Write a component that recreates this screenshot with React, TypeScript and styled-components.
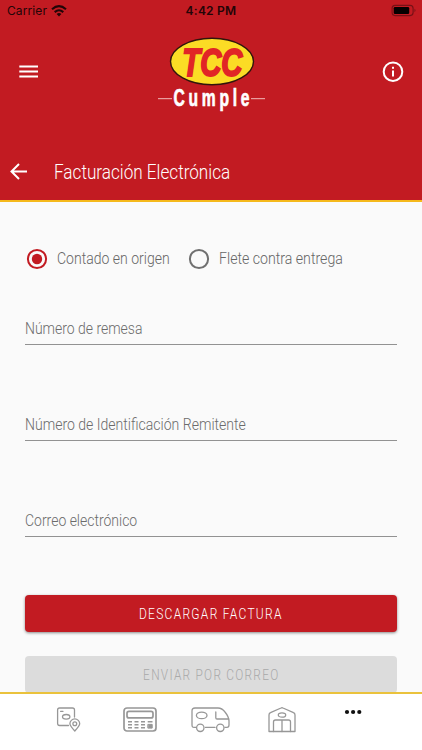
import React, { useState } from "react";
import styled, { createGlobalStyle } from "styled-components";

const red = "#c21b22";

const GlobalStyle = createGlobalStyle`
  * { box-sizing: border-box; }
  body { margin: 0; background: #fafafa; }
  button { border: 0; padding: 0; background: none; font: inherit; color: inherit; }
  svg { flex: none; overflow: visible; }
`;

const Screen = styled.div`
  display: flex;
  flex-direction: column;
  width: 422px;
  height: 750px;
  overflow: hidden;
  background: #fafafa;
  font-family: Roboto, sans-serif;
  font-weight: 300;
`;

const Header = styled.header`
  flex: none;
  height: 202px;
  background: ${red};
  border-bottom: 2px solid #f5b91c;
`;

const StatusBar = styled.div`
  display: grid;
  grid-template-columns: 1fr auto 1fr;
  align-items: center;
  height: 22px;
  padding: 0 7px;
  color: #230507;
  font: 400 12px/22px Inter, sans-serif;
`;

const Carrier = styled.div`
  display: flex;
  align-items: center;
  gap: 4px;
  letter-spacing: 0.1px;
`;

const Clock = styled.div`
  font-weight: 600;
  letter-spacing: 0.25px;
`;

const Battery = styled.svg`
  justify-self: end;
  margin-right: -2px;
`;

const Brand = styled.div`
  display: flex;
  justify-content: space-between;
  align-items: flex-start;
  height: 122px;
  padding: 14px 17px 0 17px;
`;

const IconButton = styled.button<{ $top?: number }>`
  display: flex;
  width: 24px;
  height: 24px;
  margin-top: ${(p) => p.$top ?? 0}px;
  color: #fff;
`;

const TitleRow = styled.div`
  display: flex;
  align-items: center;
  gap: 22.5px;
  height: 56px;
  padding-left: 7px;
`;

const Narrow = styled.span<{ $scale: number; $center?: boolean }>`
  display: inline-block;
  white-space: nowrap;
  transform: scaleX(${(p) => p.$scale});
  transform-origin: ${(p) => (p.$center ? "center" : "left")};
`;

const Title = styled.h1`
  margin: 0;
  color: #fff;
  font-size: 20px;
  font-weight: 300;
  line-height: 28px;
`;

const Form = styled.main`
  flex: 1;
  min-height: 0;
  overflow: hidden;
  padding: 45px 25px 0;
`;

const Options = styled.div`
  display: grid;
  grid-template-columns: 161.5px 1fr;
  height: 24px;
`;

const Option = styled.button`
  display: flex;
  align-items: center;
  gap: 8px;
  min-width: 0;
  color: #666;
  font-size: 16.5px;
  line-height: 24px;
`;

const Field = styled.label`
  display: flex;
  align-items: flex-end;
  height: 96px;
  padding-bottom: 4px;
  border-bottom: 1px solid #929292;
  color: #6b6b6b;
  font-size: 16px;
  line-height: 22px;
`;

const Fields = styled.div`
  margin-top: -22px;
`;

const Action = styled.button<{ $disabled?: boolean }>`
  display: block;
  width: 100%;
  height: 36.5px;
  border-radius: 4px;
  background: ${(p) => (p.$disabled ? "#dcdcdc" : red)};
  color: ${(p) => (p.$disabled ? "#a9a9a9" : "#fff")};
  box-shadow: ${(p) => (p.$disabled ? "none" : "0 1px 3px rgba(0,0,0,.45)")};
  font-size: 15px;
  line-height: 38px;
  letter-spacing: 1.6px;
`;

const Actions = styled.div`
  display: grid;
  gap: 24.5px;
  margin-top: 58px;
`;

const TabBar = styled.nav`
  flex: none;
  display: flex;
  justify-content: center;
  height: 58px;
  padding-top: 9px;
  border-top: 2px solid #eac23c;
  background: #fff;
`;

const Tab = styled.button`
  display: flex;
  justify-content: center;
  width: 71.2px;
  height: 28px;
  color: #979797;
`;

function Logo() {
  return (
    <svg width="110" height="76" viewBox="0 0 110 76">
      <ellipse cx="56" cy="25.5" rx="41.5" ry="23.3" fill="#fbdc25" stroke="#30150c" strokeWidth="1.4" />
      <text x="56.3" y="39.5" textAnchor="middle" textLength="60" lengthAdjust="spacingAndGlyphs"
        fontFamily="Liberation Sans, sans-serif" fontSize="39.5" fontWeight="700" fontStyle="italic"
        fill="#e12526" stroke="#e12526" strokeWidth="2">TCC</text>
      <path d="M2 62.7H16M95 62.7H109" stroke="#f2bcbc" strokeWidth="1" />
      <g transform="translate(17.6 69.7) scale(0.68 1)">
        <text x="0" y="0" textLength="111.5" lengthAdjust="spacing"
          fontFamily="Liberation Sans, sans-serif" fontSize="23" fontWeight="700"
          fill="#fff" stroke="#fff" strokeWidth="0.7">Cumple</text>
      </g>
    </svg>
  );
}

function Radio({ checked }: { checked: boolean }) {
  return (
    <svg width="24" height="24" viewBox="0 0 24 24">
      <circle cx="12" cy="12" r="9.1" fill="none" stroke={checked ? red : "#707070"} strokeWidth="2" />
      {checked && <circle cx="12" cy="12" r="5.2" fill={red} />}
    </svg>
  );
}

const stroke = { fill: "none", stroke: "currentColor", strokeWidth: 1.3, strokeLinecap: "round", strokeLinejoin: "round" } as const;

function PackageIcon() {
  return (
    <svg width="24" height="28" viewBox="0 0 24 28" {...stroke}>
      <path d="M11.5 22.5H2.6Q.6 22.5 .6 20.5V7Q.6 5 2.6 5H15.5Q17.5 5 17.5 7V14M3.6 8.3H6" />
      <ellipse cx="9.2" cy="13.8" rx="3.7" ry="2.3" />
      <path d="M17.8 28C14.7 24.6 12.9 22.6 12.9 20.8a4.9 4.9 0 0 1 9.8 0c0 1.8-1.8 3.8-4.9 7.2Z" />
      <circle cx="17.8" cy="20.8" r="1.9" />
    </svg>
  );
}

function CalculatorIcon() {
  return (
    <svg width="34" height="28" viewBox="0 0 34 28" {...stroke}>
      <rect x="1" y="5" width="32" height="23" rx="3" strokeWidth="1.7" />
      <rect x="4" y="8.4" width="26" height="6.5" rx="2" strokeWidth="1.7" />
      <path d="M5 18.7H9M11.5 18.7H15.5M18 18.7H22M5 21.8H9M11.5 21.8H15.5M18 21.8H22M5 24.8H9M11.5 24.8H15.5M18 24.8H22M24.7 18.7H29.5" strokeWidth="1.5" strokeLinecap="butt" />
      <rect x="25.2" y="21.4" width="4" height="3.7" fill="currentColor" strokeWidth="1" />
    </svg>
  );
}

function VanIcon() {
  return (
    <svg width="40" height="28" viewBox="0 0 40 28" {...stroke}>
      <path d="M5 24.4H3Q1 24.4 1 22V8Q1 5 4 5H27Q31 5 34 9Q38 14 38 18V22Q38 24.4 36 24.4H34M14.5 24.4H24M24.8 9V14.8Q24.8 16 26 16H37.3" />
      <ellipse cx="10.7" cy="12.4" rx="5.3" ry="3.2" />
      <circle cx="9.3" cy="24.8" r="3.7" />
      <circle cx="29.3" cy="24.8" r="3.7" />
    </svg>
  );
}

function WarehouseIcon() {
  return (
    <svg width="28" height="28" viewBox="0 0 28 28" {...stroke}>
      <path d="M1 28.5V12Q1 10.3 2.5 9.7L13 5Q14 4.5 15 5L25.5 9.7Q27 10.3 27 12V28.5Z" />
      <path d="M5.5 28.5V19Q5.5 17 7.5 17H20.5Q22.5 17 22.5 19V28.5M14 17V28.5" />
      <ellipse cx="14" cy="12" rx="3.7" ry="2.2" />
    </svg>
  );
}

function MoreIcon() {
  return (
    <svg width="20" height="28" viewBox="0 0 20 28" fill="#101010">
      <circle cx="4" cy="9" r="2.1" /><circle cx="10.1" cy="9" r="2.1" /><circle cx="16.3" cy="9" r="2.1" />
    </svg>
  );
}

const options = [
  { label: "Contado en origen", scale: 0.85 },
  { label: "Flete contra entrega", scale: 0.857 },
];

const fields = [
  { label: "Número de remesa", scale: 0.873 },
  { label: "Número de Identificación Remitente", scale: 0.878 },
  { label: "Correo electrónico", scale: 0.873 },
];

const tabs = [PackageIcon, CalculatorIcon, VanIcon, WarehouseIcon, MoreIcon];

export default function App() {
  const [selected, setSelected] = useState(0);
  return (
    <>
      <GlobalStyle />
      <Screen>
        <Header>
          <StatusBar>
            <Carrier>
              Carrier
              <svg width="16" height="12" viewBox="0 0 16 12" fill="none" stroke="currentColor" strokeWidth="2.1">
                <path d="M1 4.2Q8 -1.8 15 4.2M3.7 7.1Q8 3.4 12.3 7.1" />
                <path d="M8 11.5 5.6 9Q8 7 10.4 9Z" fill="currentColor" stroke="none" />
              </svg>
            </Carrier>
            <Clock>4:42 PM</Clock>
            <Battery width="25" height="12" viewBox="0 0 25 12">
              <rect x="0.1" y="0.4" width="21" height="10.2" rx="3" fill="none" stroke="#771116" strokeWidth="1.1" />
              <rect x="1.7" y="2" width="15.5" height="7" rx="1.3" fill="#050000" />
              <path d="M22.5 3.8Q24.5 5.5 22.5 7.2Z" fill="#771116" />
            </Battery>
          </StatusBar>
          <Brand>
            <IconButton $top={24} aria-label="Menú">
              <svg width="24" height="24" viewBox="0 0 24 24" stroke="currentColor" strokeWidth="2">
                <path d="M2.3 6.4H21M2.3 11.5H21M2.3 16.6H21" />
              </svg>
            </IconButton>
            <Logo />
            <IconButton $top={24} aria-label="Información">
              <svg width="24" height="24" viewBox="0 0 24 24" fill="none" stroke="currentColor" strokeWidth="2">
                <circle cx="12" cy="11.7" r="9.3" />
                <path d="M12 10.5V16.5M12 6.7V8.7" />
              </svg>
            </IconButton>
          </Brand>
          <TitleRow>
            <IconButton aria-label="Volver">
              <svg width="24" height="24" viewBox="0 0 24 24" fill="none" stroke="currentColor" strokeWidth="2">
                <path d="M20 11.5H5M12 4 4.5 11.5 12 19" />
              </svg>
            </IconButton>
            <Title><Narrow $scale={0.857}>Facturación Electrónica</Narrow></Title>
          </TitleRow>
        </Header>
        <Form>
          <Options>
            {options.map((o, i) => (
              <Option key={o.label} onClick={() => setSelected(i)}>
                <Radio checked={selected === i} />
                <Narrow $scale={o.scale}>{o.label}</Narrow>
              </Option>
            ))}
          </Options>
          <Fields>
            {fields.map((f) => (
              <Field key={f.label}><Narrow $scale={f.scale}>{f.label}</Narrow></Field>
            ))}
          </Fields>
          <Actions>
            <Action><Narrow $scale={0.8} $center>DESCARGAR FACTURA</Narrow></Action>
            <Action $disabled><Narrow $scale={0.79} $center>ENVIAR POR CORREO</Narrow></Action>
          </Actions>
        </Form>
        <TabBar>
          {tabs.map((Icon, i) => (
            <Tab key={i}><Icon /></Tab>
          ))}
        </TabBar>
      </Screen>
    </>
  );
}
